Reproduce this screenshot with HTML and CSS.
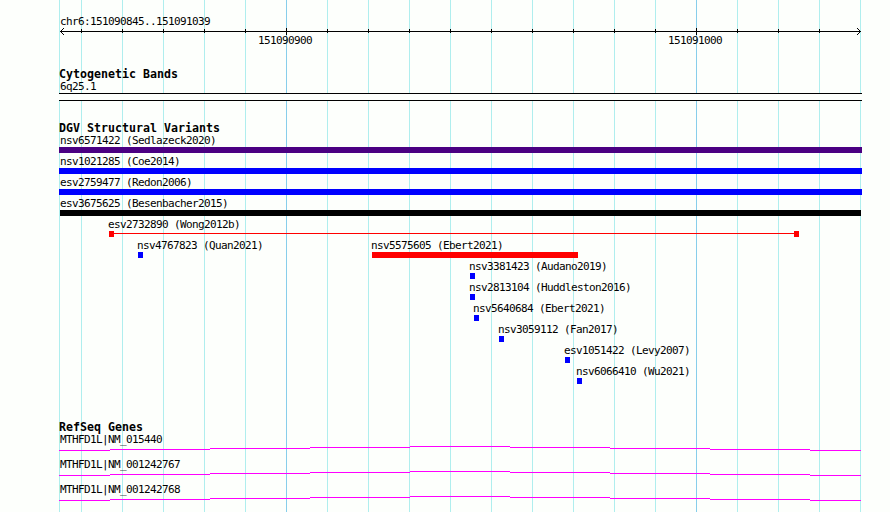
FILE: index.html
```
<!DOCTYPE html>
<html lang="en">
<head>
  <meta charset="UTF-8" />
  <title>chr6:151090845..151091039</title>
  <link rel="stylesheet" href="styles.css">
</head>
<body>

  <div class="browser">

    <!-- Scale -->
    <div class="scale">
      <div class="label">chr6:151090845..151091039</div>
      <svg class="axis" id="axis" width="803" height="7" shape-rendering="crispEdges">
        <rect x="1" y="3" width="801" height="1" />
      </svg>
      <div class="scale-numbers">
        <span class="label">151090900</span>
        <span class="label">151091000</span>
      </div>
    </div>

    <!-- Cytogenetic Bands -->
    <div class="track cyto">
      <h2>Cytogenetic Bands</h2>
      <div class="label">6q25.1</div>
      <div class="band"></div>
    </div>

    <!-- DGV Structural Variants -->
    <div class="track variants">
      <h2>DGV Structural Variants</h2>
      <div class="row">
        <div class="feature wide"><div class="label">nsv6571422 (Sedlazeck2020)</div><div class="bar indigo"></div></div>
      </div>
      <div class="row">
        <div class="feature wide"><div class="label">nsv1021285 (Coe2014)</div><div class="bar blue"></div></div>
      </div>
      <div class="row">
        <div class="feature wide"><div class="label">esv2759477 (Redon2006)</div><div class="bar blue"></div></div>
      </div>
      <div class="row">
        <div class="feature wide inner"><div class="label">esv3675625 (Besenbacher2015)</div><div class="bar black"></div></div>
      </div>
      <div class="row">
        <div class="feature" style="margin-left: 50px; width: 690px"><div class="label">esv2732890 (Wong2012b)</div><div class="bar span"></div></div>
      </div>
      <div class="row">
        <div class="feature" style="margin-left: 79px; width: 5px"><div class="label">nsv4767823 (Quan2021)</div><div class="bar blue"></div></div>
        <div class="feature" style="margin-left: 229px; width: 206px"><div class="label">nsv5575605 (Ebert2021)</div><div class="bar red"></div></div>
      </div>
      <div class="row">
        <div class="feature" style="margin-left: 411px; width: 5px"><div class="label">nsv3381423 (Audano2019)</div><div class="bar blue"></div></div>
      </div>
      <div class="row">
        <div class="feature" style="margin-left: 411px; width: 5px"><div class="label">nsv2813104 (Huddleston2016)</div><div class="bar blue"></div></div>
      </div>
      <div class="row">
        <div class="feature" style="margin-left: 415px; width: 5px"><div class="label">nsv5640684 (Ebert2021)</div><div class="bar blue"></div></div>
      </div>
      <div class="row">
        <div class="feature" style="margin-left: 440px; width: 5px"><div class="label">nsv3059112 (Fan2017)</div><div class="bar blue"></div></div>
      </div>
      <div class="row">
        <div class="feature" style="margin-left: 506px; width: 5px"><div class="label">esv1051422 (Levy2007)</div><div class="bar blue"></div></div>
      </div>
      <div class="row">
        <div class="feature" style="margin-left: 518px; width: 5px"><div class="label">nsv6066410 (Wu2021)</div><div class="bar blue"></div></div>
      </div>
    </div>

    <!-- RefSeq Genes -->
    <div class="track genes">
      <h2>RefSeq Genes</h2>
      <div class="gene">
        <div class="label">MTHFD1L|NM_015440</div>
        <svg class="intron" width="803" height="5" shape-rendering="crispEdges"></svg>
      </div>
      <div class="gene">
        <div class="label">MTHFD1L|NM_001242767</div>
        <svg class="intron" width="803" height="5" shape-rendering="crispEdges"></svg>
      </div>
      <div class="gene">
        <div class="label">MTHFD1L|NM_001242768</div>
        <svg class="intron" width="803" height="5" shape-rendering="crispEdges"></svg>
      </div>
    </div>

  </div>

  <script src="tracks.js"></script>
</body>
</html>
```
FILE: styles.css
```
body {
  margin: 0;
  background: #fdfffc;
  color: #000;
  font-family: "DejaVu Sans Mono", "Liberation Mono", monospace;
  font-size: 11px;
  overflow: hidden;
}

/* grid: minor line every 41px, major line every 410px */
.browser {
  width: 803px;
  height: 512px;
  margin-left: 59px;
  overflow: hidden;
  background-image:
    linear-gradient(#87ceeb, #87ceeb),
    linear-gradient(#87ceeb, #87ceeb),
    linear-gradient(#afeeee, #afeeee),
    repeating-linear-gradient(to right, #afeeee 0, #afeeee 1px, transparent 1px, transparent 41px);
  background-size: 1px 100%, 1px 100%, 1px 100%, 780px 100%;
  background-position: 227px 0, 637px 0, 0 0, 22px 0;
  background-repeat: no-repeat;
}

.label {
  height: 12px;
  line-height: 12px;
  padding-left: 1px;
  letter-spacing: -0.62px;
  white-space: nowrap;
}

h2 {
  margin: 0;
  height: 13px;
  line-height: 13px;
  font-size: 11.6px;
  font-weight: bold;
  letter-spacing: 0.02px;
}

svg {
  display: block;
}

/* scale */
.scale {
  height: 68px;
  padding-top: 16px;
  box-sizing: border-box;
}

.scale-numbers {
  display: flex;
  gap: 355px;
  padding-left: 198px;
}

/* cytogenetic bands */
.cyto {
  height: 54px;
}

.band {
  height: 6px;
  background: #fdfffc;
  border-top: 1px solid #000;
  border-bottom: 1px solid #000;
}

/* structural variants */
.variants {
  height: 299px;
}

.row {
  display: flex;
  height: 21px;
}

.feature {
  flex: none;
}

.feature .label {
  margin-left: -1px;
  padding-left: 0;
}

.wide {
  width: 803px;
}

.wide .label {
  margin-left: 1px;
}

.inner {
  width: 801px;
  margin-left: 1px;
}

.inner .label {
  margin-left: 0;
}

.bar {
  height: 6px;
}

.indigo { background: #4b0082; }
.blue { background: #0000ff; }
.black { background: #000; }
.red { background: #ff0000; }

/* two end boxes joined by a thin line */
.span {
  border-left: 5px solid #ff0000;
  border-right: 5px solid #ff0000;
  background: linear-gradient(#ff0000, #ff0000) 0 2px / 100% 1px no-repeat;
}

/* genes */
.gene {
  height: 25px;
}
```
FILE: tracks.js
```
const NS = 'http://www.w3.org/2000/svg';

function addRect(svg, x, y, width, height, fill) {
  const rect = document.createElementNS(NS, 'rect');
  rect.setAttribute('x', x);
  rect.setAttribute('y', y);
  rect.setAttribute('width', width);
  rect.setAttribute('height', height);
  rect.setAttribute('fill', fill);
  svg.appendChild(rect);
}

// scale ticks
const axis = document.getElementById('axis');
for (let x = 22; x < 800; x += 41) {
  const major = x === 227 || x === 637;
  addRect(axis, x, major ? 0 : 1, 1, major ? 7 : 4, '#000');
}

// arrow heads
for (let i = 1; i <= 3; i++) {
  addRect(axis, 1 + i, 3 - i, 1, 1, '#000');
  addRect(axis, 1 + i, 3 + i, 1, 1, '#000');
  addRect(axis, 801 - i, 3 - i, 1, 1, '#000');
  addRect(axis, 801 - i, 3 + i, 1, 1, '#000');
}

// introns are drawn as a shallow stepped hat
const steps = [0, 51, 151, 251, 351, 451, 551, 651, 751, 802];
const heights = [4, 3, 2, 1, 0, 1, 2, 3, 4];
document.querySelectorAll('.intron').forEach(svg => {
  heights.forEach((y, i) => {
    addRect(svg, steps[i], y, steps[i + 1] - steps[i], 1, '#ff00ff');
  });
});
```
